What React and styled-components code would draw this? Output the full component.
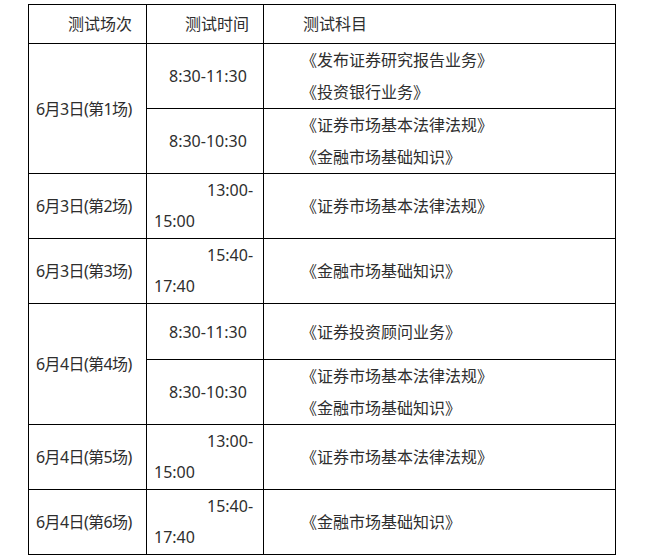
import React from "react";
import styled, { createGlobalStyle } from "styled-components";

const GlobalStyle = createGlobalStyle`
  html, body {
    margin: 0;
    padding: 0;
    background: #fff;
  }
  body {
    font-family: "Noto Sans", "Noto Sans CJK SC", sans-serif;
  }
`;

// 页面
const Page = styled.div`
  padding: 4px 0 0 28px;
  width: 646px;
  height: 557px;
  box-sizing: border-box;
`;

// 表格
const Table = styled.table`
  width: 587px;
  border-collapse: collapse;
  table-layout: fixed;
  color: #2e2e2e;
  font-size: 16px;
`;

const Row = styled.tr`
  height: ${(p) => p.$h}px;
`;

const Cell = styled.td`
  border: 1px solid #000;
  padding: 0 7px;
  vertical-align: middle;
  text-align: left;
  white-space: nowrap;
  line-height: 32px;
  text-indent: ${(p) => p.$indent || 0}px;
`;

const HeadCell = styled(Cell)`
  line-height: 24px;
`;

// 场次列，字距稍紧
const SessionCell = styled(Cell)`
  letter-spacing: -0.6px;
`;

// 时间分两行的情况
const Line = styled.span`
  display: block;
  line-height: 31px;
  text-indent: ${(p) => p.$indent || 0}px;
`;

const Subject = styled.span`
  display: block;
  line-height: 32px;
`;

const data = [
  {
    session: "6月3日(第1场)",
    slots: [
      { h: 65, time: "8:30-11:30", subjects: ["《发布证券研究报告业务》", "《投资银行业务》"] },
      { h: 65, time: "8:30-10:30", subjects: ["《证券市场基本法律法规》", "《金融市场基础知识》"] },
    ],
  },
  {
    session: "6月3日(第2场)",
    slots: [{ h: 65, time: ["13:00-", "15:00"], subjects: ["《证券市场基本法律法规》"] }],
  },
  {
    session: "6月3日(第3场)",
    slots: [{ h: 65, time: ["15:40-", "17:40"], subjects: ["《金融市场基础知识》"] }],
  },
  {
    session: "6月4日(第4场)",
    slots: [
      { h: 56, time: "8:30-11:30", subjects: ["《证券投资顾问业务》"] },
      { h: 65, time: "8:30-10:30", subjects: ["《证券市场基本法律法规》", "《金融市场基础知识》"] },
    ],
  },
  {
    session: "6月4日(第5场)",
    slots: [{ h: 65, time: ["13:00-", "15:00"], subjects: ["《证券市场基本法律法规》"] }],
  },
  {
    session: "6月4日(第6场)",
    slots: [{ h: 65, time: ["15:40-", "17:40"], subjects: ["《金融市场基础知识》"] }],
  },
];

const TimeCell = ({ time }) =>
  Array.isArray(time) ? (
    <Cell>
      <Line $indent={53}>{time[0]}</Line>
      <Line>{time[1]}</Line>
    </Cell>
  ) : (
    <Cell $indent={15}>{time}</Cell>
  );

export default function App() {
  return (
    <Page>
      <GlobalStyle />
      <Table>
        <colgroup>
          <col style={{ width: 118 }} />
          <col style={{ width: 117 }} />
          <col style={{ width: 352 }} />
        </colgroup>
        <tbody>
          <Row $h={39}>
            <HeadCell $indent={32}>测试场次</HeadCell>
            <HeadCell $indent={31}>测试时间</HeadCell>
            <HeadCell $indent={32}>测试科目</HeadCell>
          </Row>
          {data.map((group) =>
            group.slots.map((slot, i) => (
              <Row key={group.session + i} $h={slot.h}>
                {i === 0 && (
                  <SessionCell rowSpan={group.slots.length}>{group.session}</SessionCell>
                )}
                <TimeCell time={slot.time} />
                <Cell $indent={30}>
                  {slot.subjects.map((s) => (
                    <Subject key={s}>{s}</Subject>
                  ))}
                </Cell>
              </Row>
            ))
          )}
        </tbody>
      </Table>
    </Page>
  );
}
